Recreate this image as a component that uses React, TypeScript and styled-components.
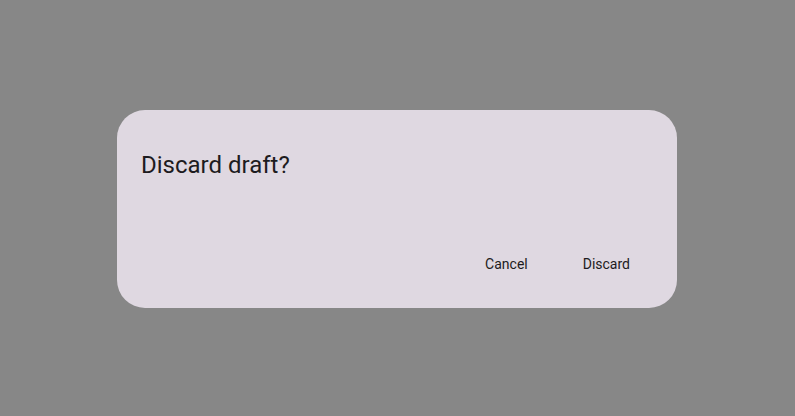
import React from 'react'
import styled, { createGlobalStyle } from 'styled-components'

const GlobalStyle = createGlobalStyle`
  html, body {
    margin: 0;
    padding: 0;
    background: #878787;
  }
  body {
    font-family: Roboto, 'Liberation Sans', sans-serif;
  }
`

const Scrim = styled.div`
  width: 795px;
  height: 416px;
  display: flex;
  align-items: flex-start;
  justify-content: flex-start;
  padding: 110px 0 0 117px;
  box-sizing: border-box;
  background: #878787;
`

const Dialog = styled.div`
  width: 560px;
  height: 198px;
  box-sizing: border-box;
  background: #dfd8e1;
  border-radius: 28px;
  padding: 39px 23px 24px 24px;
  display: flex;
  flex-direction: column;
  justify-content: space-between;
`

const Title = styled.h2`
  margin: 0;
  font-size: 24px;
  line-height: 32px;
  font-weight: 400;
  color: #1d1b20;
`

const Actions = styled.div`
  display: flex;
  justify-content: flex-end;
  gap: 7px;
`

const TextButton = styled.button`
  height: 40px;
  padding: 0 24px;
  border: none;
  background: transparent;
  border-radius: 20px;
  font-family: Roboto, 'Liberation Sans', sans-serif;
  font-size: 14px;
  font-weight: 400;
  color: #1d1b20;
  cursor: pointer;
`

export default function App() {
  return (
    <>
      <GlobalStyle />
      <Scrim>
        <Dialog>
          <Title>Discard draft?</Title>
          <Actions>
            <TextButton>Cancel</TextButton>
            <TextButton>Discard</TextButton>
          </Actions>
        </Dialog>
      </Scrim>
    </>
  )
}
